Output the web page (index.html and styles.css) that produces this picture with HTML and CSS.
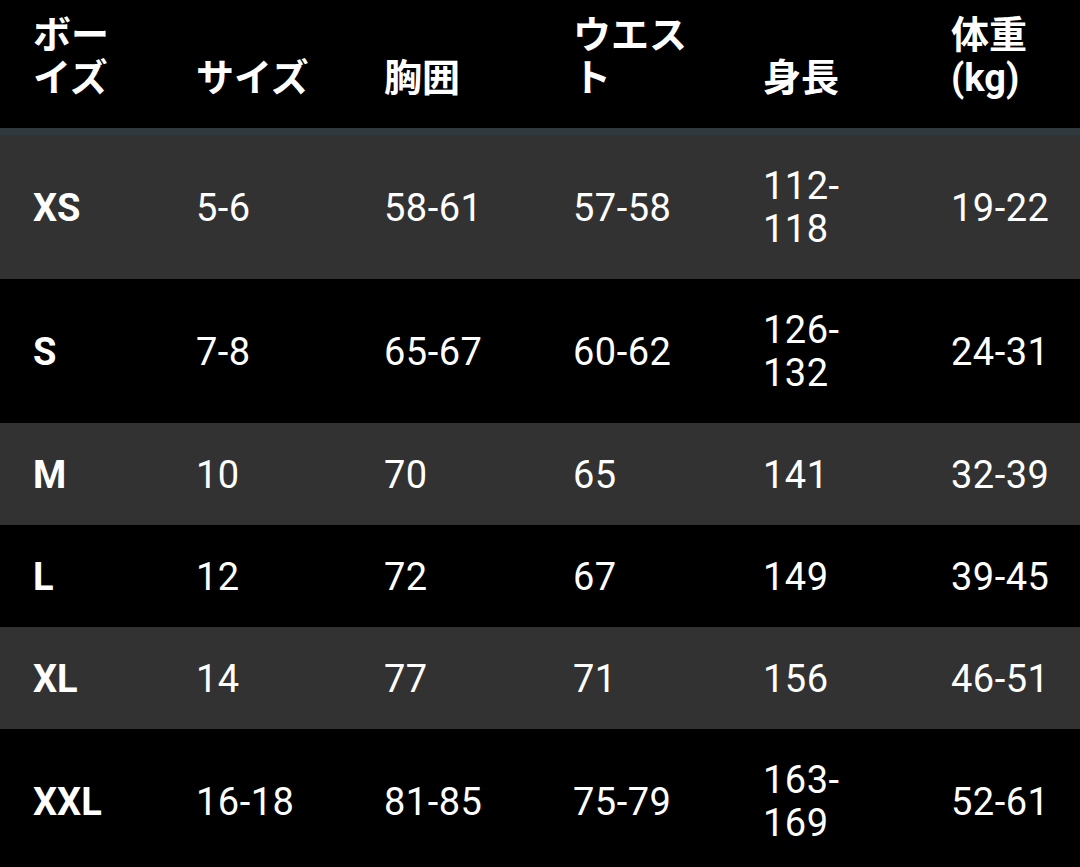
FILE: index.html
```html
<!DOCTYPE html>
<html lang="ja">
<head>
<meta charset="utf-8">
<title>ボーイズ サイズ表</title>
<link rel="stylesheet" href="styles.css">
</head>
<body>
<div class="size-table">
  <div class="row head">
    <div class="cell">ボーイズ</div>
    <div class="cell">サイズ</div>
    <div class="cell">胸囲</div>
    <div class="cell">ウエスト</div>
    <div class="cell">身長</div>
    <div class="cell">体重(kg)</div>
  </div>
  <div class="row shade tall">
    <div class="cell key">XS</div>
    <div class="cell">5-6</div>
    <div class="cell">58-61</div>
    <div class="cell">57-58</div>
    <div class="cell">112-<wbr>118</div>
    <div class="cell">19-22</div>
  </div>
  <div class="row tall">
    <div class="cell key">S</div>
    <div class="cell">7-8</div>
    <div class="cell">65-67</div>
    <div class="cell">60-62</div>
    <div class="cell">126-<wbr>132</div>
    <div class="cell">24-31</div>
  </div>
  <div class="row shade">
    <div class="cell key">M</div>
    <div class="cell">10</div>
    <div class="cell">70</div>
    <div class="cell">65</div>
    <div class="cell">141</div>
    <div class="cell">32-39</div>
  </div>
  <div class="row">
    <div class="cell key">L</div>
    <div class="cell">12</div>
    <div class="cell">72</div>
    <div class="cell">67</div>
    <div class="cell">149</div>
    <div class="cell">39-45</div>
  </div>
  <div class="row shade">
    <div class="cell key">XL</div>
    <div class="cell">14</div>
    <div class="cell">77</div>
    <div class="cell">71</div>
    <div class="cell">156</div>
    <div class="cell">46-51</div>
  </div>
  <div class="row tall">
    <div class="cell key">XXL</div>
    <div class="cell">16-18</div>
    <div class="cell">81-85</div>
    <div class="cell">75-79</div>
    <div class="cell">163-<wbr>169</div>
    <div class="cell">52-61</div>
  </div>
</div>
</body>
</html>
```

FILE: styles.css
```css
html, body {
  margin: 0;
  padding: 0;
  background: #000;
}

body {
  font-family: Roboto, "Noto Sans CJK JP", sans-serif;
  font-size: 38px;
  line-height: 43px;
  color: #fff;
  overflow: hidden;
}

.size-table {
  width: 1080px;
}

.row {
  display: grid;
  grid-template-columns: 196px 188px 189px 190px 188px 1fr;
  align-items: center;
  background: #000;
  letter-spacing: 0.5px;
}

.row.shade {
  background: #323232;
}

.row.head {
  align-items: end;
  height: 128px;
  box-sizing: content-box;
  border-bottom: 7px solid #2f393e;
  font-weight: 700;
  letter-spacing: 0;
}

.cell {
  padding: 30.5px 0 28.5px 0;
  white-space: normal;
}

.tall .cell {
  padding-top: 30px;
  padding-bottom: 28px;
}

.head .cell {
  padding: 0 0 28px 0;
}

.cell:nth-child(1) {
  padding-left: 33px;
  padding-right: 60px;
}

.cell:nth-child(2),
.cell:nth-child(3),
.cell:nth-child(4),
.cell:nth-child(5) {
  padding-right: 58px;
}

.key {
  font-weight: 700;
  letter-spacing: 0;
}
```
